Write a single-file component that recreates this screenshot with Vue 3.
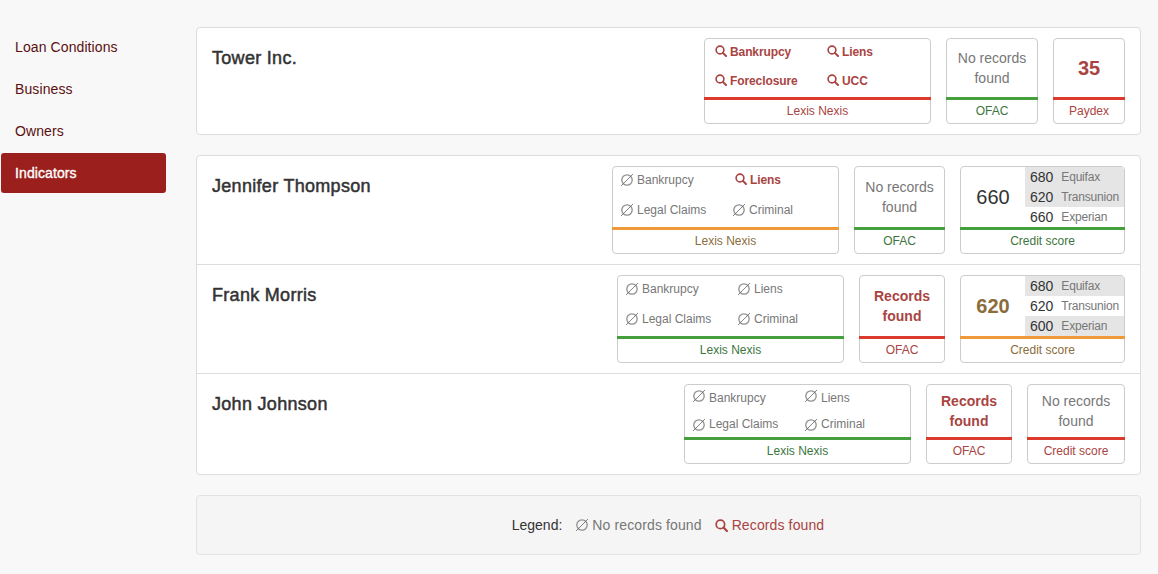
<script setup>
const navItems = ['Loan Conditions', 'Business', 'Owners', 'Indicators']

const lexis = (status, items, width = 'lexis') => ({ kind: 'lexis', label: 'Lexis Nexis', status, items, width })
const ofac = (status, found, width) => ({ kind: 'text', label: 'OFAC', status, found, width })
const credit = (status, value, bold, scores) => ({ kind: 'score', label: 'Credit score', status, value, bold, scores, width: 'credit' })

const company = {
  name: 'Tower Inc.',
  size: 'tall',
  cards: [
    lexis('red', [
      { text: 'Bankrupcy', found: true },
      { text: 'Liens', found: true },
      { text: 'Foreclosure', found: true },
      { text: 'UCC', found: true },
    ]),
    ofac('green', false, 'w92'),
    { kind: 'number', label: 'Paydex', status: 'red', value: 35, width: 'w72' },
  ],
}

const owners = [
  {
    name: 'Jennifer Thompson',
    cards: [
      lexis('orange', [
        { text: 'Bankrupcy' },
        { text: 'Liens', found: true },
        { text: 'Legal Claims' },
        { text: 'Criminal' },
      ]),
      ofac('green', false, 'w91'),
      credit('green', 660, false, [
        { value: 680, name: 'Equifax', shade: true },
        { value: 620, name: 'Transunion', shade: true },
        { value: 660, name: 'Experian' },
      ]),
    ],
  },
  {
    name: 'Frank Morris',
    cards: [
      lexis('green', [
        { text: 'Bankrupcy' },
        { text: 'Liens' },
        { text: 'Legal Claims' },
        { text: 'Criminal' },
      ]),
      ofac('red', true, 'w86'),
      credit('orange', 620, true, [
        { value: 680, name: 'Equifax', shade: true },
        { value: 620, name: 'Transunion' },
        { value: 600, name: 'Experian', shade: true },
      ]),
    ],
  },
  {
    name: 'John Johnson',
    size: 'short',
    cards: [
      lexis('green', [
        { text: 'Bankrupcy' },
        { text: 'Liens' },
        { text: 'Legal Claims' },
        { text: 'Criminal' },
      ]),
      ofac('red', true, 'w86'),
      { kind: 'text', label: 'Credit score', status: 'red', found: false, width: 'w98' },
    ],
  },
]

const panels = [[company], owners]
</script>

<template>
  <div class="page">
    <nav class="sidebar">
      <a
        v-for="item in navItems"
        :key="item"
        class="nav-item"
        :class="{ active: item === 'Indicators' }"
      >{{ item }}</a>
    </nav>

    <main class="main">
      <section v-for="(rows, p) in panels" :key="p" class="panel">
        <div v-for="row in rows" :key="row.name" class="row">
          <h2 class="name">{{ row.name }}</h2>
          <div class="cards" :class="row.size">
            <div
              v-for="card in row.cards"
              :key="card.label"
              class="card"
              :class="card.width"
            >
              <div v-if="card.kind === 'lexis'" class="body items">
                <span
                  v-for="item in card.items"
                  :key="item.text"
                  class="item"
                  :class="{ found: item.found }"
                >
                  <svg v-if="item.found" class="icon" width="12" height="12" viewBox="0 0 12 12">
                    <circle cx="5" cy="5" r="3.9" fill="none" stroke="currentColor" stroke-width="1.6" />
                    <path d="M7.9 7.9 11 11" stroke="currentColor" stroke-width="2" stroke-linecap="round" />
                  </svg>
                  <svg v-else class="icon none" width="14" height="14" viewBox="0 0 14 14">
                    <circle cx="7" cy="7" r="5.2" fill="none" stroke="#8f8f8f" stroke-width="1.3" />
                    <path d="M1 13 13 1" stroke="#666" stroke-width="0.8" />
                  </svg>
                  {{ item.text }}
                </span>
              </div>

              <div v-else-if="card.kind === 'text'" class="body message" :class="{ found: card.found }">
                {{ card.found ? 'Records found' : 'No records found' }}
              </div>

              <div v-else-if="card.kind === 'number'" class="body big red-text">{{ card.value }}</div>

              <div v-else class="body score">
                <div class="score-main" :class="{ warn: card.bold }">{{ card.value }}</div>
                <div class="score-list">
                  <div
                    v-for="s in card.scores"
                    :key="s.name"
                    class="score-row"
                    :class="{ shade: s.shade }"
                  >
                    <span class="score-value">{{ s.value }}</span>
                    <span class="score-name">{{ s.name }}</span>
                  </div>
                </div>
              </div>

              <div class="foot" :class="card.status">{{ card.label }}</div>
            </div>
          </div>
        </div>
      </section>

      <div class="legend">
        <span class="legend-title">Legend:</span>
        <span class="legend-item">
          <svg class="icon none" width="14" height="14" viewBox="0 0 14 14">
            <circle cx="7" cy="7" r="5.2" fill="none" stroke="#8f8f8f" stroke-width="1.3" />
            <path d="M1 13 13 1" stroke="#666" stroke-width="0.8" />
          </svg>
          No records found
        </span>
        <span class="legend-item found">
          <svg class="icon" width="13" height="13" viewBox="0 0 12 12">
            <circle cx="5" cy="5" r="3.9" fill="none" stroke="currentColor" stroke-width="1.6" />
            <path d="M7.9 7.9 11 11" stroke="currentColor" stroke-width="2" stroke-linecap="round" />
          </svg>
          Records found
        </span>
      </div>
    </main>
  </div>
</template>

<style>
body {
  background: #f8f8f8;
}
</style>

<style scoped>
.page {
  display: flex;
  gap: 30px;
  padding: 27px 0 0 1px;
  font-family: "Liberation Sans", Arial, sans-serif;
  font-size: 14px;
  line-height: 20px;
  color: #333;
}

/* Sidebar */
.sidebar {
  display: flex;
  flex-direction: column;
  gap: 2px;
  width: 165px;
}

.nav-item {
  padding: 10px 14px;
  border-radius: 3px;
  color: #5b1010;
  letter-spacing: 0.1px;
}

.nav-item.active {
  background: #9b1f1c;
  color: #fff;
  -webkit-text-stroke: 0.35px #fff;
}

/* Panels */
.main {
  width: 945px;
}

.panel {
  margin-bottom: 20px;
  background: #fff;
  border: 1px solid #ddd;
  border-radius: 4px;
}

.row {
  display: flex;
  justify-content: space-between;
  padding: 10px 15px;
  border-top: 1px solid #ddd;
}

.row:first-child {
  border-top: none;
}

.name {
  margin: 10px 0 0;
  font-size: 18px;
  line-height: 20px;
  font-weight: normal;
  letter-spacing: 0.3px;
  color: #333;
  -webkit-text-stroke: 0.5px #333;
}

.cards {
  display: flex;
  gap: 15px;
  height: 88px;
}

.cards.tall { height: 86px; }
.cards.short { height: 80px; }

/* Cards */
.card {
  display: flex;
  flex-direction: column;
  box-sizing: border-box;
  border: 1px solid #ccc;
  border-radius: 4px;
}

.lexis { width: 227px; }
.credit { width: 165px; }
.w98 { width: 98px; }
.w92 { width: 92px; }
.w91 { width: 91px; }
.w86 { width: 86px; }
.w72 { width: 72px; }

.body {
  flex: 1;
  min-height: 0;
}

.foot {
  margin: 0 -1px;
  height: 23px;
  border-top: 3px solid;
  font-size: 12px;
  line-height: 22px;
  text-align: center;
}

.foot.red { border-color: #dd3a2e; color: #a94442; }
.foot.green { border-color: #459f3c; color: #3c763d; }
.foot.orange { border-color: #f0993a; color: #8a6d3b; }

/* Lexis Nexis */
.items {
  display: grid;
  grid-template-columns: 112px 1fr;
  grid-template-rows: 1fr 1fr;
  padding-left: 8px;
}

.item {
  display: flex;
  align-items: flex-start;
  gap: 2px;
  padding-top: 3px;
  font-size: 12px;
  color: #777;
}

.item .icon {
  margin-top: 3px;
}

.item .icon.none {
  margin-left: -1px;
  margin-right: 1px;
}

.short .item:nth-child(-n+2) .icon {
  margin-top: 1px;
}

.short .item:nth-child(n+3) .icon {
  margin-top: 4px;
}

.item.found {
  padding-left: 2px;
  gap: 3px;
  font-weight: bold;
  letter-spacing: -0.1px;
  color: #a94442;
}

.icon {
  flex: none;
}

/* Plain and number cards */
.message {
  display: flex;
  align-items: center;
  justify-content: center;
  padding: 0 10px;
  text-align: center;
  color: #777;
}

.message.found {
  font-weight: bold;
  color: #a94442;
}

.big {
  display: flex;
  align-items: center;
  justify-content: center;
  font-size: 20px;
  font-weight: bold;
}

.red-text { color: #a94442; }

/* Credit score */
.score {
  display: flex;
}

.score-main {
  flex: 1;
  align-self: center;
  text-align: center;
  font-size: 20px;
}

.score-main.warn {
  font-weight: bold;
  color: #8a6d3b;
}

.score-list {
  width: 99px;
}

.score-row {
  display: flex;
  gap: 8px;
  height: 20px;
  padding-left: 5px;
}

.score-row.shade {
  background: #e5e5e5;
}

.score-name {
  font-size: 12px;
  letter-spacing: -0.2px;
  color: #777;
}

/* Legend */
.legend {
  display: flex;
  justify-content: center;
  align-items: center;
  gap: 14px;
  box-sizing: border-box;
  height: 60px;
  padding-right: 1px;
  background: #f5f5f5;
  border: 1px solid #e3e3e3;
  border-radius: 4px;
}

.legend-item {
  display: flex;
  align-items: center;
  gap: 3px;
  letter-spacing: 0.12px;
  color: #777;
}

.legend-item .icon.none {
  margin-left: -1px;
}

.legend-item.found {
  gap: 4px;
  margin-left: -1px;
  color: #a94442;
}
</style>
